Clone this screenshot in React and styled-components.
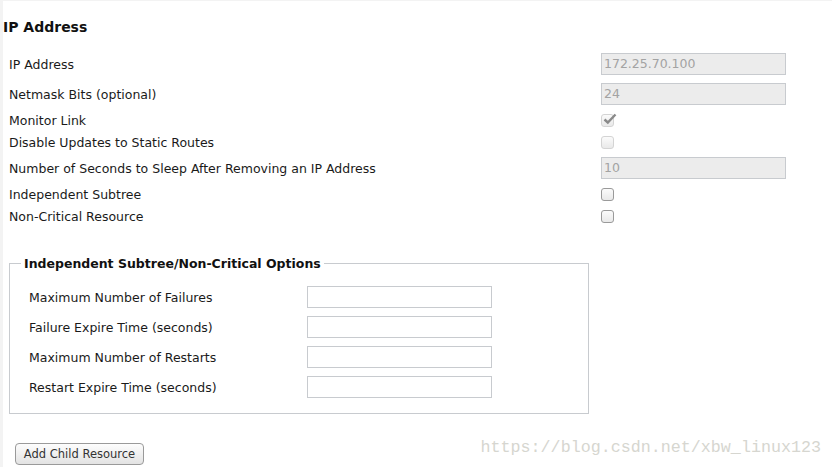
import React from 'react';
import styled, { createGlobalStyle } from 'styled-components';

const GlobalStyle = createGlobalStyle`
  html, body {
    margin: 0;
    padding: 0;
    background: #ffffff;
  }
  body {
    font-family: "DejaVu Sans", "Liberation Sans", sans-serif;
    color: #1a1a1a;
  }
`;

const Page = styled.div`
  position: relative;
  width: 832px;
  height: 467px;
  box-sizing: border-box;
  border-left: 3px solid #f3f3f3;
  border-top: 1px solid #f3f3f3;
  overflow: hidden;
`;

const Heading = styled.h2`
  margin: 0;
  padding: 17px 0 0 0;
  height: 32px;
  box-sizing: border-box;
  font-size: 14px;
  font-weight: bold;
  line-height: 18px;
  color: #111;
`;

const Form = styled.div`
  display: flex;
  flex-direction: column;
  padding: 16px 0 0 6px;
`;

const Row = styled.div`
  display: flex;
  align-items: center;
  height: ${(p) => (p.$compact ? '22px' : '30px')};
`;

const Label = styled.span`
  width: ${(p) => p.$width || '592px'};
  font-size: 12.5px;
  color: #1a1a1a;
`;

const TextInput = styled.div`
  width: 185px;
  height: 22px;
  box-sizing: border-box;
  border: 1px solid #c8cbcf;
  background: ${(p) => (p.$disabled ? '#ececec' : '#ffffff')};
  color: #a3a3a3;
  font-size: 12.5px;
  line-height: 20px;
  padding-left: 2px;
`;

const Box = styled.span`
  display: inline-flex;
  align-items: center;
  justify-content: center;
  width: 13px;
  height: 13px;
  box-sizing: border-box;
  border-radius: 3px;
  border: 1px solid ${(p) => (p.$disabled ? '#d4d4d4' : '#9a9a9a')};
  background: linear-gradient(#fbfbfb, #e9e9e9);
  position: relative;
`;

const Tick = styled.svg`
  position: absolute;
  left: 1px;
  top: -3px;
`;

const Fieldset = styled.fieldset`
  margin: 29px 0 0 6px;
  width: 580px;
  box-sizing: border-box;
  border: 1px solid #c8cbcf;
  padding: 11px 0 11px 19px;
`;

const Legend = styled.legend`
  font-size: 12.5px;
  font-weight: bold;
  color: #111;
  padding: 0 3px;
  margin-left: -8px;
`;

const Footer = styled.div`
  padding: 29px 0 0 12px;
`;

const Button = styled.button`
  width: 129px;
  height: 22px;
  border: 1px solid #9a9a9a;
  border-radius: 4px;
  background: linear-gradient(#fdfdfd, #e3e3e3);
  font-family: "DejaVu Sans", sans-serif;
  font-size: 11.5px;
  color: #333;
  padding: 0;
`;

const Watermark = styled.span`
  position: absolute;
  right: 11px;
  bottom: 10px;
  font-family: "Liberation Mono", "DejaVu Sans Mono", monospace;
  font-size: 16.7px;
  color: #d6d6d0;
`;

const Checkbox = ({ checked, disabled }) => (
  <Box $disabled={disabled}>
    {checked && (
      <Tick width="14" height="14" viewBox="0 0 14 14">
        <path d="M1.5 7.5 L4.8 10.5 L12.5 2.5" fill="none" stroke="#8a8a8a" strokeWidth="2.4" />
      </Tick>
    )}
  </Box>
);

const mainRows = [
  { label: 'IP Address', type: 'text', value: '172.25.70.100' },
  { label: 'Netmask Bits (optional)', type: 'text', value: '24' },
  { label: 'Monitor Link', type: 'check', checked: true, disabled: true },
  { label: 'Disable Updates to Static Routes', type: 'check', disabled: true },
  { label: 'Number of Seconds to Sleep After Removing an IP Address', type: 'text', value: '10' },
  { label: 'Independent Subtree', type: 'check' },
  { label: 'Non-Critical Resource', type: 'check' },
];

const optionRows = [
  'Maximum Number of Failures',
  'Failure Expire Time (seconds)',
  'Maximum Number of Restarts',
  'Restart Expire Time (seconds)',
];

const App = () => (
  <Page>
    <GlobalStyle />
    <Heading>IP Address</Heading>
    <Form>
      {mainRows.map((row) => (
        <Row key={row.label} $compact={row.type === 'check'}>
          <Label>{row.label}</Label>
          {row.type === 'text' ? (
            <TextInput $disabled>{row.value}</TextInput>
          ) : (
            <Checkbox checked={row.checked} disabled={row.disabled} />
          )}
        </Row>
      ))}
    </Form>
    <Fieldset>
      <Legend>Independent Subtree/Non-Critical Options</Legend>
      {optionRows.map((label) => (
        <Row key={label}>
          <Label $width="278px">{label}</Label>
          <TextInput />
        </Row>
      ))}
    </Fieldset>
    <Footer>
      <Button>Add Child Resource</Button>
    </Footer>
    <Watermark>https://blog.csdn.net/xbw_linux123</Watermark>
  </Page>
);

export default App;
